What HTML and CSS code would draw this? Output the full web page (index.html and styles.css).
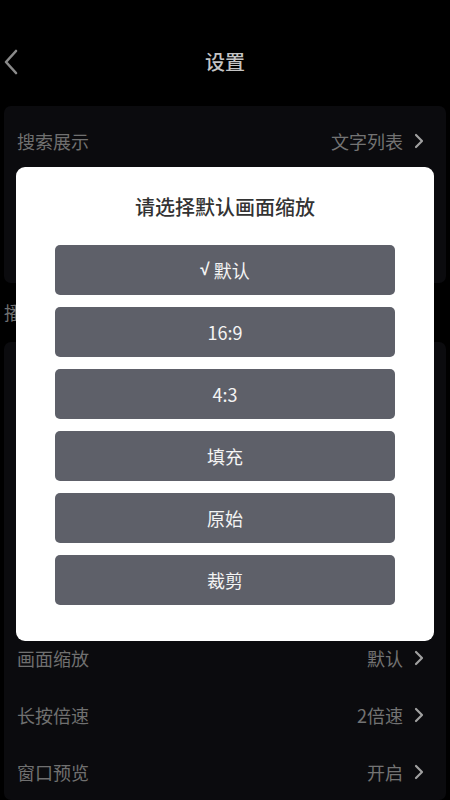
FILE: index.html
```html
<!DOCTYPE html>
<html lang="zh-CN">
<head>
<meta charset="utf-8">
<title>设置</title>
<link rel="stylesheet" href="styles.css">
</head>
<body>
<div class="page">
  <header class="header">
    <svg class="back" width="16" height="26" viewBox="0 0 16 26"><path d="M13 2 L3 13 L13 24" fill="none" stroke="#8a8a8a" stroke-width="2.6" stroke-linecap="round" stroke-linejoin="round"/></svg>
    <div class="title">设置</div>
  </header>

  <section class="card card-first">
    <div class="row"><span class="label">搜索展示</span><span class="value">文字列表<svg class="chev" width="10" height="16" viewBox="0 0 10 16"><path d="M2 2 L8 8 L2 14" fill="none" stroke="#a0a0a0" stroke-width="2.2" stroke-linecap="round" stroke-linejoin="round"/></svg></span></div>
    <div class="row"><span class="label">首页布局</span><span class="value">默认<svg class="chev" width="10" height="16" viewBox="0 0 10 16"><path d="M2 2 L8 8 L2 14" fill="none" stroke="#a0a0a0" stroke-width="2.2" stroke-linecap="round" stroke-linejoin="round"/></svg></span></div>
    <div class="row"><span class="label">主题颜色</span><span class="value">深色<svg class="chev" width="10" height="16" viewBox="0 0 10 16"><path d="M2 2 L8 8 L2 14" fill="none" stroke="#a0a0a0" stroke-width="2.2" stroke-linecap="round" stroke-linejoin="round"/></svg></span></div>
  </section>

  <div class="section-title">播放设置</div>

  <section class="card">
    <div class="row"><span class="label">播放器</span><span class="value">系统<svg class="chev" width="10" height="16" viewBox="0 0 10 16"><path d="M2 2 L8 8 L2 14" fill="none" stroke="#a0a0a0" stroke-width="2.2" stroke-linecap="round" stroke-linejoin="round"/></svg></span></div>
    <div class="row"><span class="label">解码方式</span><span class="value">硬解<svg class="chev" width="10" height="16" viewBox="0 0 10 16"><path d="M2 2 L8 8 L2 14" fill="none" stroke="#a0a0a0" stroke-width="2.2" stroke-linecap="round" stroke-linejoin="round"/></svg></span></div>
    <div class="row"><span class="label">渲染方式</span><span class="value">Surface<svg class="chev" width="10" height="16" viewBox="0 0 10 16"><path d="M2 2 L8 8 L2 14" fill="none" stroke="#a0a0a0" stroke-width="2.2" stroke-linecap="round" stroke-linejoin="round"/></svg></span></div>
    <div class="row"><span class="label">缓冲大小</span><span class="value">默认<svg class="chev" width="10" height="16" viewBox="0 0 10 16"><path d="M2 2 L8 8 L2 14" fill="none" stroke="#a0a0a0" stroke-width="2.2" stroke-linecap="round" stroke-linejoin="round"/></svg></span></div>
    <div class="row"><span class="label">字幕大小</span><span class="value">标准<svg class="chev" width="10" height="16" viewBox="0 0 10 16"><path d="M2 2 L8 8 L2 14" fill="none" stroke="#a0a0a0" stroke-width="2.2" stroke-linecap="round" stroke-linejoin="round"/></svg></span></div>
    <div class="row"><span class="label">画面缩放</span><span class="value">默认<svg class="chev" width="10" height="16" viewBox="0 0 10 16"><path d="M2 2 L8 8 L2 14" fill="none" stroke="#a0a0a0" stroke-width="2.2" stroke-linecap="round" stroke-linejoin="round"/></svg></span></div>
    <div class="row"><span class="label">长按倍速</span><span class="value">2倍速<svg class="chev" width="10" height="16" viewBox="0 0 10 16"><path d="M2 2 L8 8 L2 14" fill="none" stroke="#a0a0a0" stroke-width="2.2" stroke-linecap="round" stroke-linejoin="round"/></svg></span></div>
    <div class="row"><span class="label">窗口预览</span><span class="value">开启<svg class="chev" width="10" height="16" viewBox="0 0 10 16"><path d="M2 2 L8 8 L2 14" fill="none" stroke="#a0a0a0" stroke-width="2.2" stroke-linecap="round" stroke-linejoin="round"/></svg></span></div>
  </section>
</div>

<div class="dialog">
  <div class="dialog-title">请选择默认画面缩放</div>
  <div class="options">
    <div class="option"><span class="check">√</span> 默认</div>
    <div class="option">16:9</div>
    <div class="option">4:3</div>
    <div class="option">填充</div>
    <div class="option">原始</div>
    <div class="option">裁剪</div>
  </div>
</div>
</body>
</html>
```
FILE: styles.css
```css
html, body {
  margin: 0;
  padding: 0;
  background: #000;
  height: 800px;
  overflow: hidden;
}
body {
  font-family: "Noto Sans CJK SC", "Noto Sans", sans-serif;
}
.page {
  display: flex;
  flex-direction: column;
}
.header {
  height: 106px;
  display: flex;
  align-items: center;
  justify-content: center;
  position: relative;
  box-sizing: border-box;
  padding-top: 18px;
}
.back {
  position: absolute;
  left: 3px;
  top: 49px;
}
.title {
  color: #c4c4c4;
  font-size: 20px;
  line-height: 28px;
  font-weight: 500;
}
.card {
  margin: 0 4px;
  background: #0b0b0e;
  border-radius: 7px;
  padding-top: 2px;
}
.card-first {
  padding-top: 6px;
  height: 171px;
  overflow: hidden;
}
.row {
  height: 57px;
  display: flex;
  align-items: center;
  justify-content: space-between;
  padding: 0 22px 0 13px;
}
.label {
  color: #707070;
  font-size: 18px;
}
.value {
  color: #737373;
  font-size: 18px;
  display: flex;
  align-items: center;
  gap: 11px;
}
.chev {
  display: block;
}
.section-title {
  height: 59px;
  line-height: 59px;
  color: #707070;
  font-size: 18px;
  padding-left: 4px;
}
.dialog {
  position: absolute;
  left: 16px;
  top: 167px;
  width: 418px;
  height: 474px;
  box-sizing: border-box;
  background: #fff;
  border-radius: 9px;
  padding: 24px 39px 36px;
}
.dialog-title {
  text-align: center;
  color: #333;
  font-size: 20px;
  line-height: 32px;
  font-weight: 500;
  margin-bottom: 22px;
}
.options {
  display: flex;
  flex-direction: column;
  gap: 12px;
}
.option {
  height: 50px;
  border-radius: 5px;
  background: #5e6069;
  color: #f4f4f4;
  font-size: 18px;
  display: flex;
  align-items: center;
  justify-content: center;
  white-space: pre;
}
.check {
  font-family: "Liberation Sans", sans-serif;
  font-weight: 700;
  font-size: 17px;
}
```
